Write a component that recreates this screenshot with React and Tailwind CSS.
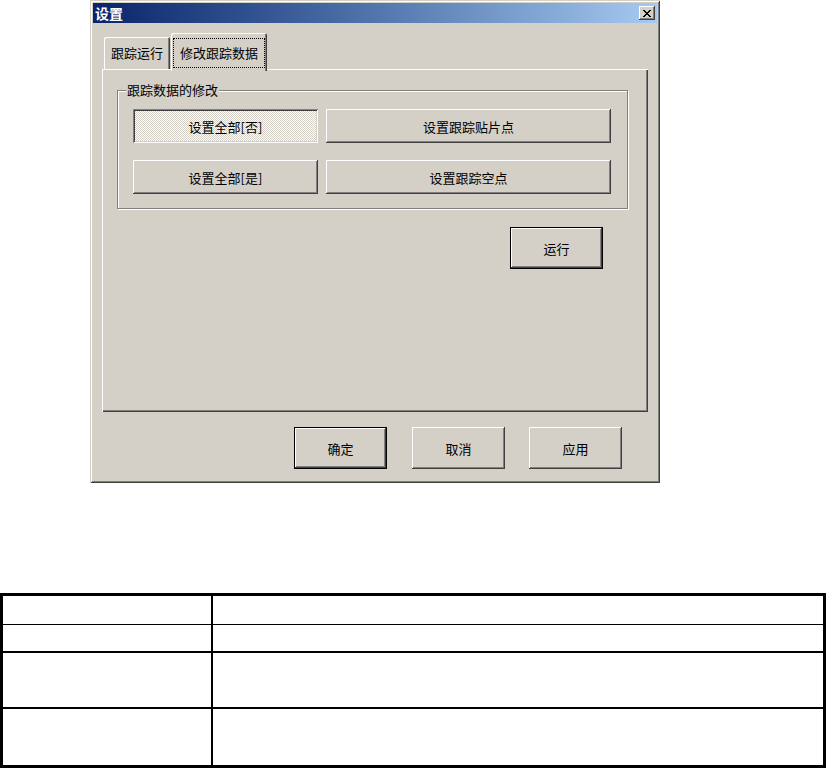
import React from 'react';

// classic 3D edges
const RAISED =
  'bg-[#d4d0c8] shadow-[inset_-1px_-1px_0_#404040,inset_1px_1px_0_#fff,inset_-2px_-2px_0_#808080,inset_2px_2px_0_#d4d0c8]';
const DEFAULT_BTN =
  'bg-[#d4d0c8] border border-black shadow-[inset_-1px_-1px_0_#404040,inset_1px_1px_0_#fff,inset_-2px_-2px_0_#808080]';
const CHECKED =
  'bg-[image:repeating-conic-gradient(#fff_0%_25%,#d4d0c8_0%_50%)] bg-[length:2px_2px] shadow-[inset_1px_1px_0_#808080,inset_-1px_-1px_0_#fff,inset_2px_2px_0_#404040,inset_-2px_-2px_0_#d4d0c8]';

const X_GLYPH = ['11....11', '.11..11.', '..1111..', '...11...', '..1111..', '.11..11.', '11....11'];

const CloseIcon = () => (
  <svg width="8" height="7" viewBox="0 0 8 7" shapeRendering="crispEdges">
    {X_GLYPH.map((row, y) =>
      row.split('').map((c, x) => (c === '1' ? <rect key={`${x}-${y}`} x={x} y={y} width="1" height="1" fill="#000" /> : null))
    )}
  </svg>
);

const Button = ({ children, className = '', variant = 'raised' }) => {
  const look = variant === 'default' ? DEFAULT_BTN : variant === 'checked' ? CHECKED : RAISED;
  return (
    <button className={`${look} ${className} flex items-center justify-center text-[13px] leading-none text-black`}>
      {children}
    </button>
  );
};

// heights include the bottom rule (border-box)
const rows = [
  { h: 'h-[29px]', line: 'border-b border-black' },
  { h: 'h-[28px]', line: 'border-b-2 border-black' },
  { h: 'h-[56px]', line: 'border-b-2 border-black' },
  { h: 'h-[56px]', line: '' },
];

export default function App() {
  return (
    <div className="w-[827px] h-[768px] overflow-hidden bg-white font-['Noto_Sans_CJK_SC',sans-serif] text-[13px] text-black">
      {/* dialog window */}
      <div className="ml-[90px] w-[570px] h-[483px] p-[3px] flex flex-col bg-[#d4d0c8] shadow-[inset_1px_1px_0_#d4d0c8,inset_-1px_-1px_0_#404040,inset_2px_2px_0_#fff,inset_-2px_-2px_0_#808080]">
        {/* title bar */}
        <div className="h-[20px] flex items-center justify-between px-[2px] bg-linear-to-r from-[#0a246a] to-[#a6caf0]">
          <span className="text-white font-bold text-[14px] leading-none">设置</span>
          <button className={`${RAISED} w-[16px] h-[14px] flex items-center justify-center`}>
            <CloseIcon />
          </button>
        </div>

        <div className="flex-1 flex flex-col px-[9px] pt-[10px]">
          {/* tabs */}
          <div className="relative z-10 -mb-[2px] h-[38px] flex items-end pl-[2px]">
            <div className="w-[66px] h-[32px] mb-[2px] flex items-center justify-center rounded-t-[2px] shadow-[inset_1px_1px_0_#fff,inset_-1px_0_0_#404040,inset_-2px_0_0_#808080]">
              跟踪运行
            </div>
            <div className="ml-[1px] w-[96px] h-[38px] flex px-[2px] pt-[5px] pb-[3px] bg-[#d4d0c8] rounded-t-[2px] shadow-[inset_1px_1px_0_#fff,inset_-1px_0_0_#404040,inset_-2px_0_0_#808080]">
              <div className="flex-1 flex items-center justify-center border border-dotted border-black">
                修改跟踪数据
              </div>
            </div>
          </div>

          {/* tab page */}
          <div className="h-[343px] flex flex-col shadow-[inset_1px_1px_0_#fff,inset_-1px_-1px_0_#404040,inset_-2px_-2px_0_#808080]">
            <div className="relative mt-[21px] ml-[15px] w-[511px] h-[119px] pl-[15px] pt-[18px] border border-[#808080] shadow-[1px_1px_0_#fff,inset_1px_1px_0_#fff]">
              <span className="absolute left-[8px] -top-[9px] px-[1px] leading-[16px] bg-[#d4d0c8]">跟踪数据的修改</span>
              <div className="grid grid-cols-[185px_285px] gap-x-[8px] gap-y-[17px]">
                <Button variant="checked" className="h-[34px]">设置全部[否]</Button>
                <Button className="h-[34px]">设置跟踪贴片点</Button>
                <Button className="h-[34px]">设置全部[是]</Button>
                <Button className="h-[34px]">设置跟踪空点</Button>
              </div>
            </div>
            <Button variant="default" className="mt-[18px] ml-[408px] w-[93px] h-[42px]">运行</Button>
          </div>

          {/* dialog buttons */}
          <div className="mt-[15px] flex justify-end pr-[26px]">
            <Button variant="default" className="w-[93px] h-[42px] mr-[25px]">确定</Button>
            <Button className="w-[93px] h-[42px] mr-[24px]">取消</Button>
            <Button className="w-[93px] h-[42px]">应用</Button>
          </div>
        </div>
      </div>

      {/* empty table */}
      <div className="mt-[110px] w-[826px] border-[3px] border-black">
        {rows.map((r, i) => (
          <div key={i} className={`flex ${r.h} ${r.line}`}>
            <div className="w-[210px] border-r-2 border-black" />
            <div className="flex-1" />
          </div>
        ))}
      </div>
    </div>
  );
}
